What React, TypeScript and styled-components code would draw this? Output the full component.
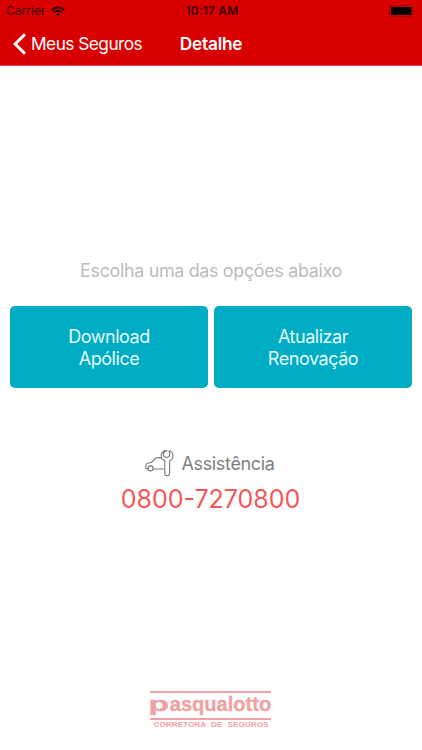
import React from "react";
import styled, { createGlobalStyle } from "styled-components";

const GlobalStyle = createGlobalStyle`
  * { box-sizing: border-box; }
  body { margin: 0; background: #fff; font-family: Inter, "Liberation Sans", sans-serif; }
`;

const Screen = styled.div`
  width: 422px;
  height: 750px;
  display: flex;
  flex-direction: column;
  overflow: hidden;
  background: #fff;
`;

const Header = styled.header`
  height: 66px;
  background: #d80000;
  border-bottom: 1px solid #e0484a;
`;

const StatusBar = styled.div`
  height: 22px;
  display: grid;
  grid-template-columns: 1fr auto 1fr;
  align-items: center;
  padding: 0 6px 0 6px;
  color: #3a0000;
  font-size: 12px;
  line-height: 22px;
`;

const Carrier = styled.div`
  display: flex;
  align-items: center;
  gap: 5px;
  letter-spacing: 0.05px;
`;

const Clock = styled.div`
  font-weight: 600;
  letter-spacing: 0.15px;
  padding-left: 2px;
`;

const BatterySlot = styled.div`
  display: flex;
  justify-content: flex-end;
`;

const NavBar = styled.nav`
  height: 43px;
  display: grid;
  grid-template-columns: 1fr auto 1fr;
  align-items: center;
  padding: 0 12px;
  color: #fff;
  font-size: 17.3px;
`;

const BackButton = styled.button`
  display: flex;
  align-items: center;
  gap: 4px;
  justify-self: start;
  padding: 0;
  border: 0;
  background: none;
  color: inherit;
  font: inherit;
  letter-spacing: -0.53px;
  white-space: nowrap;
`;

const Title = styled.h1`
  margin: 0;
  font-size: inherit;
  font-weight: 600;
  letter-spacing: -0.2px;
`;

const Content = styled.main`
  flex: 1;
  display: flex;
  flex-direction: column;
  align-items: center;
  padding-top: 192px;
`;

const Prompt = styled.p`
  margin: 0;
  height: 24px;
  line-height: 25px;
  font-size: 18px;
  font-weight: 400;
  letter-spacing: -0.38px;
  color: #bcbcbc;
  white-space: nowrap;
`;

const Actions = styled.div`
  width: 100%;
  display: grid;
  grid-template-columns: 198px 198px;
  gap: 6px;
  padding-left: 10px;
  margin-top: 24px;
`;

const ActionButton = styled.button`
  height: 82px;
  border: 0;
  border-radius: 5px;
  background: #00acc4;
  color: #e2fbfd;
  font-family: inherit;
  font-size: 18px;
  font-weight: 400;
  line-height: 22px;
  letter-spacing: -0.45px;
  padding: 1px 0 0;
`;

const Assistance = styled.section`
  margin-top: 60px;
  display: flex;
  flex-direction: column;
  align-items: center;
`;

const AssistanceLabel = styled.div`
  display: flex;
  align-items: center;
  gap: 7px;
  height: 30px;
  padding-right: 2px;
  font-size: 18px;
  font-weight: 400;
  letter-spacing: -0.35px;
  color: #808080;
`;

const Phone = styled.a`
  height: 40px;
  line-height: 42px;
  padding-right: 1px;
  font-size: 25px;
  font-weight: 400;
  color: #f45757;
  letter-spacing: 0;
  white-space: nowrap;
`;

const Footer = styled.footer`
  height: 62px;
  display: flex;
  justify-content: center;
`;

const WifiIcon = () => (
  <svg width="14" height="11" viewBox="0 0 14 11" fill="none" stroke="#250000" strokeWidth="1.9">
    <path d="M.8 4.1C4.3.7 9.7.7 13.2 4.1" />
    <path d="M3.1 6.5c2.3-2.1 5.5-2.1 7.8 0" />
    <path d="M7 10.4 4.9 8.2c1.2-1 3-1 4.2 0z" fill="#250000" stroke="none" />
  </svg>
);

const BatteryIcon = () => (
  <svg width="27" height="12" viewBox="0 0 27 12">
    <rect x=".7" y=".7" width="23" height="10.6" rx="2.4" fill="none" stroke="#a00000" />
    <rect x="2" y="2" width="20.4" height="8" rx="1" fill="#000" />
    <path d="M25 4.2c1.6.5 1.6 3.1 0 3.6z" fill="#a00000" />
  </svg>
);

const Chevron = () => (
  <svg width="15" height="22" viewBox="0 0 15 22" fill="none" stroke="#fff" strokeWidth="3">
    <path d="M13 1.3 3.2 11 13 20.7" />
  </svg>
);

const CarWrenchIcon = () => (
  <svg width="29" height="28" viewBox="0 0 29 28" fill="none" stroke="#777" strokeWidth="1.1" strokeLinecap="round" strokeLinejoin="round">
    <path d="M16.3 8.6h-3.1c-1.6 0-2.5.4-3.5 1.4l-3.2 3.3-3.9 1c-1.2.3-1.7 1-1.7 2.2v2.4c0 .7.4 1 1 1h1" />
    <circle cx="5.6" cy="19.4" r="2.5" />
    <path d="M8.2 20h10" />
    <path d="M19.8 11.8v12.4a2.4 2.4 0 0 0 4.8 0V11.8c2.2-.9 3.4-2.7 3.4-5 0-2.3-1.2-4.2-3.4-5.1l-.7.5 1 3-1 2.5-2.6.9-2.3-1.1-.8-2.4 1-2.2 2.6-1.2c-3-.5-5.6 1.8-5.6 4.9 0 2.4 1.4 4.4 3.6 5.3z" />
  </svg>
);

const Logo = () => (
  <svg width="124" height="42" viewBox="0 0 124 42" fill="#eda3a5">
    <rect x="1" y="3" width="121" height="2" />
    <rect x="1" y="30" width="121" height="2" />
    <g fontFamily="Liberation Sans, sans-serif" fontWeight="700" fontSize="20.5" stroke="#eda3a5" strokeWidth=".4">
      <text x="-.5" y="22.8" textLength="20.5" lengthAdjust="spacingAndGlyphs">p</text>
      <text x="20.8" y="22.8" textLength="101.4" lengthAdjust="spacingAndGlyphs">asqualotto</text>
    </g>
    <text x="4.5" y="39" fontFamily="Liberation Sans, sans-serif" fontWeight="700" fontSize="7.3" wordSpacing="2.5" textLength="115" lengthAdjust="spacingAndGlyphs">CORRETORA DE SEGUROS</text>
  </svg>
);

export default function App() {
  return (
    <>
      <GlobalStyle />
      <Screen>
        <Header>
          <StatusBar>
            <Carrier>Carrier <WifiIcon /></Carrier>
            <Clock>10:17 AM</Clock>
            <BatterySlot><BatteryIcon /></BatterySlot>
          </StatusBar>
          <NavBar>
            <BackButton><Chevron />Meus Seguros</BackButton>
            <Title>Detalhe</Title>
          </NavBar>
        </Header>
        <Content>
          <Prompt>Escolha uma das opções abaixo</Prompt>
          <Actions>
            <ActionButton>Download<br />Apólice</ActionButton>
            <ActionButton>Atualizar<br />Renovação</ActionButton>
          </Actions>
          <Assistance>
            <AssistanceLabel><CarWrenchIcon />Assistência</AssistanceLabel>
            <Phone>0800-7270800</Phone>
          </Assistance>
        </Content>
        <Footer><Logo /></Footer>
      </Screen>
    </>
  );
}
